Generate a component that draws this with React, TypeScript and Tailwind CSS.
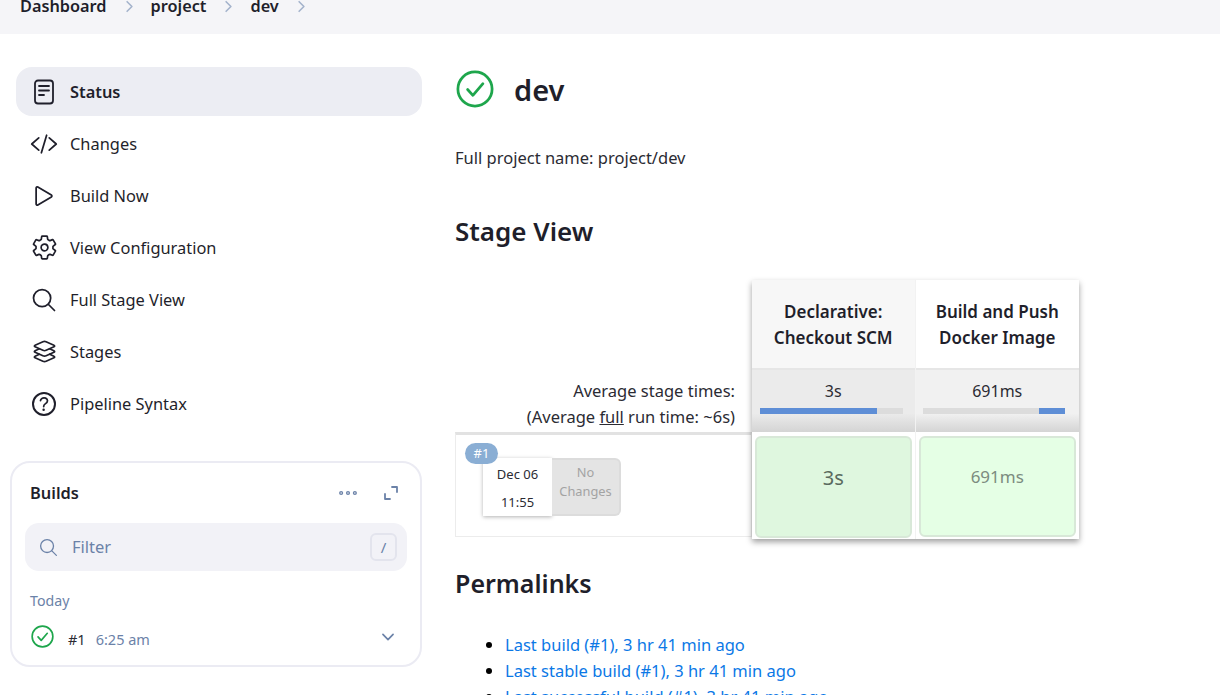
import {
  IoCodeSlashOutline,
  IoPlayOutline,
  IoSettingsOutline,
  IoSearchOutline,
  IoLayersOutline,
  IoHelpCircleOutline,
  IoEllipsisHorizontalOutline,
  IoChevronDownOutline,
  IoChevronForwardOutline,
} from "react-icons/io5";

const StatusIcon = () => (
  <svg width="24" height="26" viewBox="0 0 24 26" fill="none" stroke="#1f1f2b" strokeWidth="1.8" strokeLinecap="round">
    <rect x="3" y="1.5" width="18" height="23" rx="3" />
    <path d="M7 7h10M7 11.5h10M7 16h5" />
  </svg>
);

const CheckCircle = ({ size }: { size: number }) => (
  <svg width={size} height={size} viewBox="0 0 36 36" fill="none" stroke="#1ea64c" strokeLinecap="round" strokeLinejoin="round">
    <circle cx="18" cy="18" r="16.2" strokeWidth="2.6" />
    <path d="M11 18.5l5 5.5 9.5-11" strokeWidth="2.6" />
  </svg>
);

const ExpandIcon = () => (
  <svg width="16" height="16" viewBox="0 0 16 16" fill="none" stroke="#6b82a8" strokeWidth="1.8" strokeLinecap="round" strokeLinejoin="round">
    <path d="M9 2h5v5M2 9v5h5" />
  </svg>
);

const navItems = [
  { label: "Status", icon: <StatusIcon />, active: true },
  { label: "Changes", icon: <IoCodeSlashOutline size={28} /> },
  { label: "Build Now", icon: <IoPlayOutline size={28} /> },
  { label: "View Configuration", icon: <IoSettingsOutline size={27} /> },
  { label: "Full Stage View", icon: <IoSearchOutline size={28} /> },
  { label: "Stages", icon: <IoLayersOutline size={27} /> },
  { label: "Pipeline Syntax", icon: <IoHelpCircleOutline size={32} /> },
];

const crumbs = ["Dashboard", "project", "dev"];

const links = [
  "Last build (#1), 3 hr 41 min ago",
  "Last stable build (#1), 3 hr 41 min ago",
  "Last successful build (#1), 3 hr 41 min ago",
];

const Sidebar = () => (
  <aside className="w-[455px] shrink-0 pt-[33px]">
    <div className="ml-4 flex w-[406px] flex-col gap-[3px]">
      {navItems.map((item) => (
        <div
          key={item.label}
          className={`flex h-[49px] items-center rounded-[16px] text-[#1f1f2b] ${item.active ? "bg-[#ecedf3] font-semibold" : ""}`}
        >
          <span className="flex w-[54px] justify-center pl-[2px]">{item.icon}</span>
          <span className="mt-[2px] text-[16.4px]">{item.label}</span>
        </div>
      ))}
    </div>
    <div className="ml-[10px] mt-[33px] h-[206px] w-[412px] rounded-[20px] border-2 border-[#ebebf3] px-[13px] pt-[16px]">
      <div className="flex h-[28px] items-center justify-between pl-[5px] pr-[8px]">
        <span className="text-[16.4px] font-semibold text-[#1f1f2b]">Builds</span>
        <div className="flex items-center gap-[24px] text-[#6b82a8]">
          <IoEllipsisHorizontalOutline size={22} />
          <ExpandIcon />
        </div>
      </div>
      <div className="mt-[16px] flex h-[48px] items-center rounded-[14px] bg-[#f2f2f7] pl-[13px] pr-[10px] text-[#6b82a8]">
        <IoSearchOutline size={21} />
        <span className="ml-[13px] flex-1 text-[16.5px]">Filter</span>
        <span className="flex h-[28px] w-[27px] items-center justify-center rounded-[6px] border-2 border-[#e3e4ed] text-[15px]">/</span>
      </div>
      <div className="mt-[19px] pl-[5px] text-[14.2px] leading-[22px] text-[#6b82a8]">Today</div>
      <div className="mt-[11px] flex items-center pl-[6px] pr-[10px]">
        <CheckCircle size={23} />
        <span className="ml-[14px] mt-[6px] text-[14.5px] text-[#2b2b33]">#1</span>
        <span className="ml-[10px] mt-[6px] flex-1 text-[14.5px] text-[#6b82a8]">6:25 am</span>
        <IoChevronDownOutline size={18} className="text-[#6b82a8]" />
      </div>
    </div>
  </aside>
);

const StageHeader = ({ lines, shaded }: { lines: string[]; shaded?: boolean }) => (
  <div className={`flex h-[88px] flex-col items-center justify-center pt-[2px] text-[17px] font-semibold leading-[26px] text-[#1f1f2b] ${shaded ? "bg-[#f7f7f7]" : "bg-white"}`}>
    {lines.map((line) => (
      <span key={line}>{line}</span>
    ))}
  </div>
);

const AvgCell = ({ time, fill, right, shaded }: { time: string; fill: string; right?: boolean; shaded?: boolean }) => (
  <div className={`h-[64px] border-t-2 border-[#e6e6e6] bg-gradient-to-b from-transparent from-70% to-[#d4d4d4] pt-[9px] ${shaded ? "bg-[#ebebeb] pl-[8px] pr-[12px]" : "bg-[#f1f1f1] pl-[7px] pr-[14px]"}`}>
    <div className={`text-center text-[16px] leading-[24px] text-[#2b2b33] ${shaded ? "-mr-[4px]" : "-mr-[7px]"}`}>{time}</div>
    <div className={`mt-[5px] flex h-[6px] bg-[#dcdcdc] ${right ? "justify-end" : ""}`}>
      <div className={`h-full bg-[#5e8ed6] ${fill}`} />
    </div>
  </div>
);

const StageView = () => (
  <div className="mt-[31px] flex h-[259px] w-[624px]">
    <div className="mb-[2px] flex w-[297px] flex-col justify-end">
      <div className="pr-[17px] text-right text-[16.5px] leading-[26px] text-[#2b2b33]">
        <div>Average stage times:</div>
        <div>
          (Average <span className="underline">full</span> run time: ~6s)
        </div>
      </div>
      <div className="mt-[2px] h-[105px] border-x border-b border-t-[3px] border-[#ececec] border-t-[#e2e2e2] pl-[27px] pt-[23px]">
        <div className="relative flex h-[58px]">
          <span className="absolute -left-[18px] -top-[15px] flex h-[21px] w-[33px] items-center justify-center rounded-full bg-[#8aaed4] text-[13px] text-white">
            #1
          </span>
          <div className="flex w-[69px] flex-col items-center bg-white pt-[2px] text-[13px] leading-[28px] text-[#2b2b33] shadow-[0_1px_4px_rgba(0,0,0,0.3)]">
            <span>Dec 06</span>
            <span>11:55</span>
          </div>
          <div className="flex w-[69px] flex-col items-center justify-center rounded-r-[6px] border-2 border-l-0 border-[#dcdcdc] bg-[#e4e4e4] pb-[10px] text-[12.8px] leading-[19px] text-[#a3a3a3]">
            <span>No</span>
            <span>Changes</span>
          </div>
        </div>
      </div>
    </div>
    <div className="grid w-[327px] grid-cols-2 bg-white shadow-[0_3px_6px_rgba(0,0,0,0.38)]">
      <div className="flex flex-col border-r border-[#f2f2f2]">
        <StageHeader shaded lines={["Declarative:", "Checkout SCM"]} />
        <AvgCell shaded time="3s" fill="w-[82%]" />
        <div className="flex h-[107px] px-[3px] pb-[1px] pt-[4px]">
          <div className="flex flex-1 items-start justify-center rounded-[6px] border-2 border-[#d8e8d8] bg-[#dff7df] pt-[25px] text-[20px] text-[#5a6a5e]">3s</div>
        </div>
      </div>
      <div className="flex flex-col">
        <StageHeader lines={["Build and Push", "Docker Image"]} />
        <AvgCell right time="691ms" fill="w-[18%]" />
        <div className="flex h-[107px] px-[3px] pb-[2px] pt-[4px]">
          <div className="flex flex-1 items-start justify-center rounded-[6px] border-2 border-[#d8e8d8] bg-[#e5ffe5] pt-[26px] text-[17px] text-[#7c8c80]">691ms</div>
        </div>
      </div>
    </div>
  </div>
);

export default function App() {
  return (
    <div className="h-[695px] w-[1220px] overflow-hidden bg-white font-['Noto_Sans',sans-serif]">
      <div className="flex h-[34px] items-center gap-[13px] bg-[#f5f5f8] pb-[22px] pl-[20px] text-[16.3px] font-semibold text-[#1f1f2b]">
        {crumbs.map((crumb) => (
          <div key={crumb} className="flex items-center gap-[14px]">
            <span>{crumb}</span>
            <IoChevronForwardOutline size={17} className="text-[#a4b3cc]" />
          </div>
        ))}
      </div>
      <div className="flex">
        <Sidebar />
        <main className="flex-1 pt-[34px]">
          <div className="flex h-[42px] items-center gap-[20px] pl-[1px]">
            <CheckCircle size={38} />
            <h1 className="mt-[2px] text-[29px] font-semibold text-[#1f1f2b]">dev</h1>
          </div>
          <p className="mt-[36px] text-[16.5px] leading-[24px] text-[#2b2b33]">Full project name: project/dev</p>
          <h2 className="mt-[43px] text-[26px] font-semibold leading-[36px] text-[#1f1f2b]">Stage View</h2>
          <StageView />
          <h2 className="mt-[26px] text-[25px] font-semibold leading-[36px] text-[#1f1f2b]">Permalinks</h2>
          <ul className="mt-[31px] list-disc pl-[50px] text-[16.5px] leading-[26px] text-[#0b78e6] marker:text-black">
            {links.map((link) => (
              <li key={link}>{link}</li>
            ))}
          </ul>
        </main>
      </div>
    </div>
  );
}
